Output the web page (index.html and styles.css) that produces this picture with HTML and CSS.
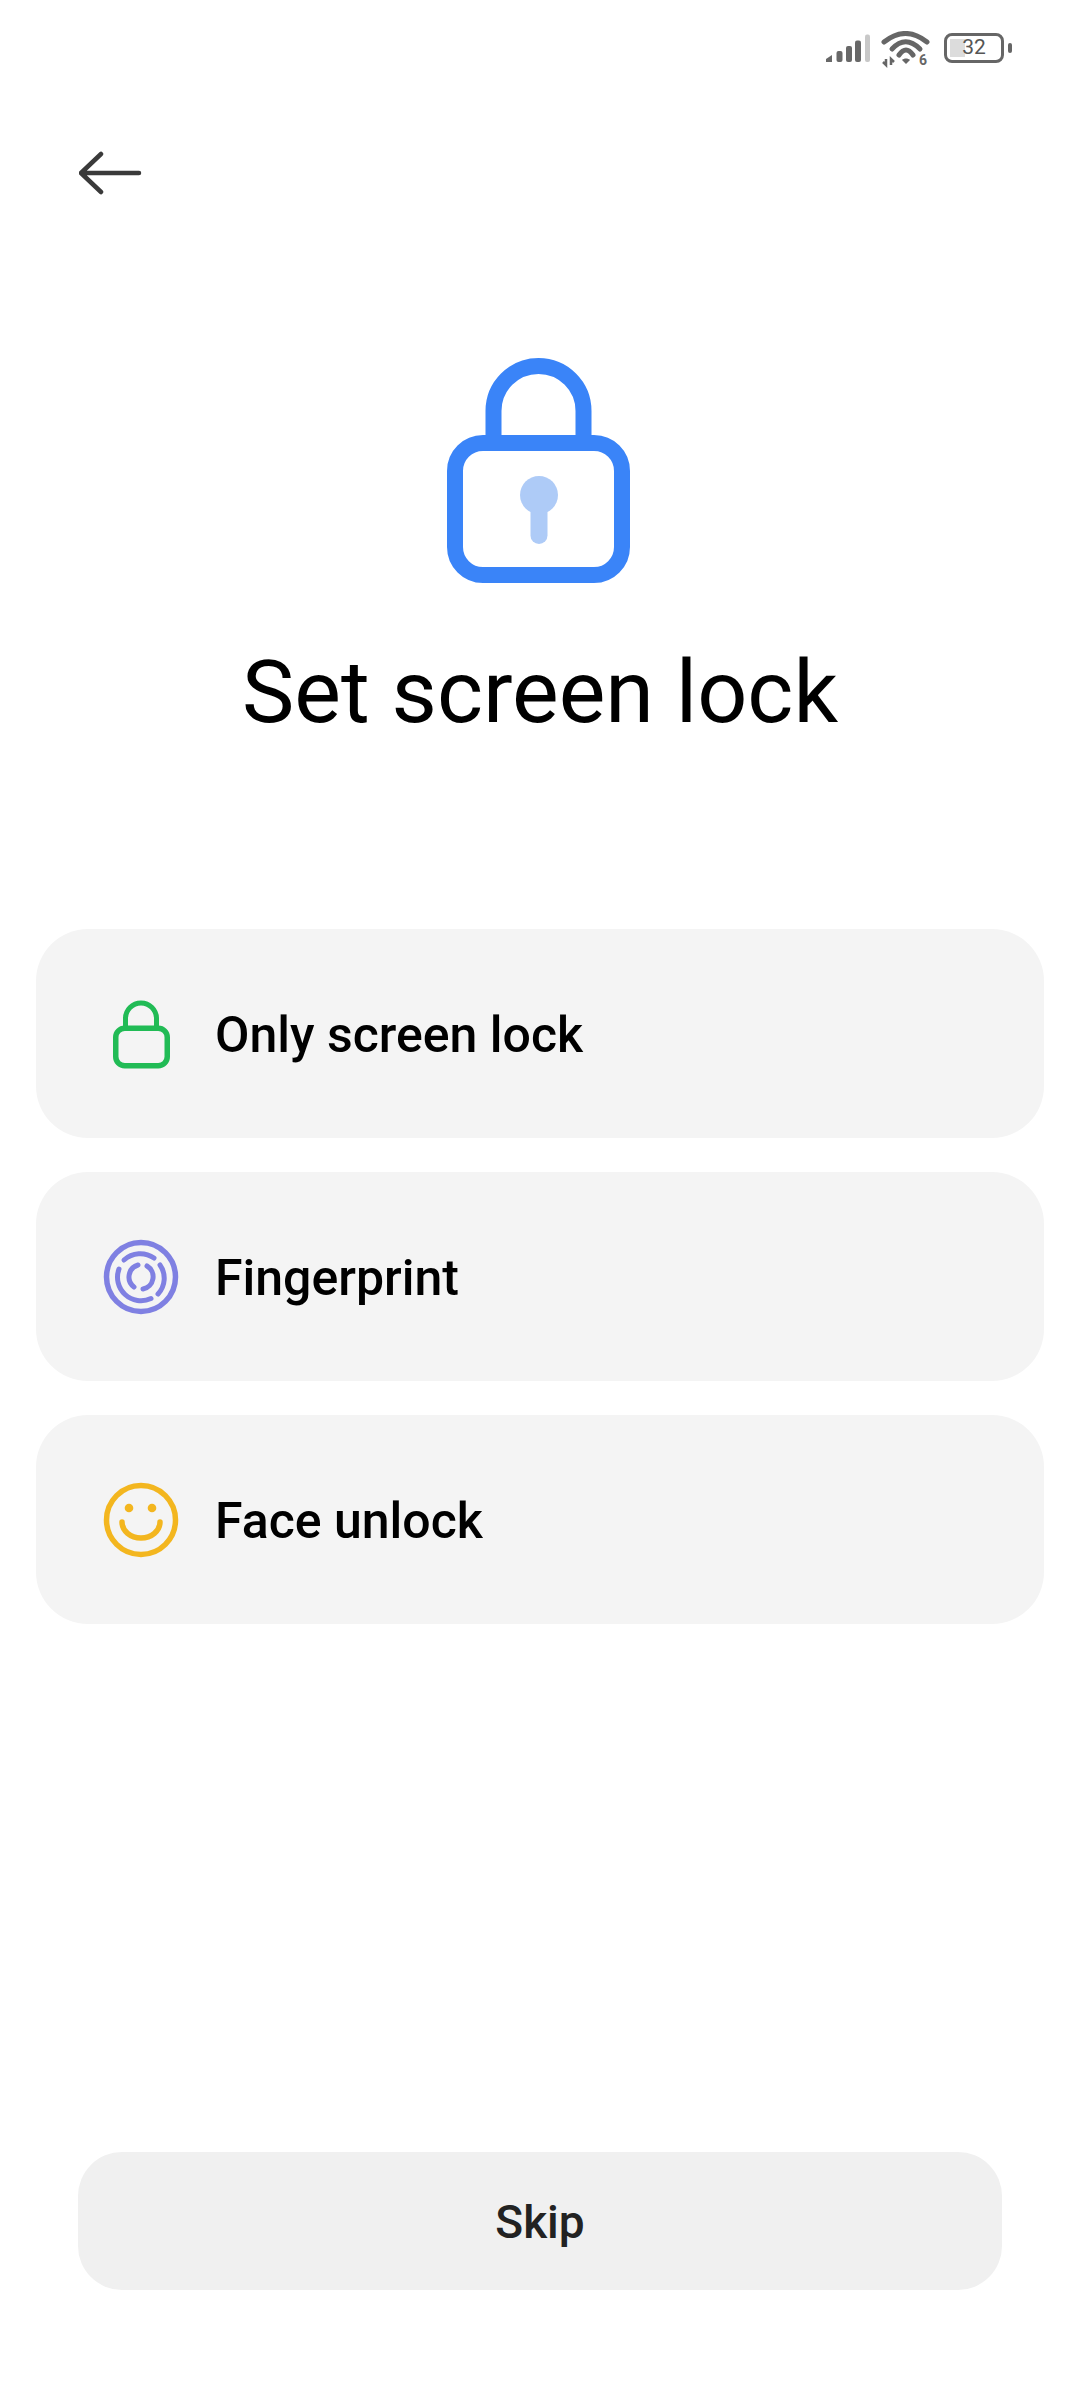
FILE: index.html
```html
<!DOCTYPE html>
<html lang="en">

<head>
    <meta charset="UTF-8">
    <meta name="viewport" content="width=device-width, initial-scale=1.0">
    <title>Set screen lock</title>
    <link rel="stylesheet" href="styles.css">
</head>

<body>
    <div class="page">
        <!-- status bar -->
        <div class="status">
            <svg class="status__signal" width="46" height="30" viewBox="0 0 46 30">
                <g fill="#686868">
                    <path d="M2 28v-3l6-4v7z"/>
                    <rect x="12.500" y="17" width="6" height="11" rx="2"/>
                    <rect x="22" y="12" width="6" height="16" rx="2"/>
                    <rect x="31" y="6.500" width="6" height="21.500" rx="2"/>
                </g>
                <rect x="41" y="0.500" width="5" height="27.500" rx="2" fill="#c8c8c8"/>
            </svg>
            <svg class="status__wifi" width="50" height="40" viewBox="0 0 50 40">
                <g stroke="#666" stroke-width="5" stroke-linecap="round" fill="none">
                    <path d="M3 11Q24.500 -6 46 11"/>
                    <path d="M11 18Q24.500 3.500 39 18"/>
                    <path d="M18 24Q25 14 32 24"/>
                </g>
                <path d="M21 29c2-2 6-2 8 0l-4 4z" fill="#666"/>
                <path d="M5 28v6l-3-3M10 34v-6l3 3" stroke="#666" stroke-width="2.500" fill="none"/>
                <text x="38" y="34" class="status__six">6</text>
            </svg>
            <div class="status__battery">
                <div class="status__level"></div>
                <span class="status__num">32</span>
            </div>
            <div class="status__nub"></div>
        </div>

        <!-- back -->
        <div class="back">
            <svg width="64" height="44" viewBox="0 0 64 44">
                <path d="M22 3L2 22L22 41M2 22H60" fill="none" stroke="#3a3a3a" stroke-width="4.500" stroke-linecap="round" stroke-linejoin="round"/>
            </svg>
        </div>

        <!-- header -->
        <div class="head">
            <svg width="186" height="230" viewBox="0 0 186 230">
                <path d="M46.500 90V56a45 45 0 0 1 90 0v34" fill="none" stroke="#3a84f8" stroke-width="16"/>
                <rect x="8" y="88" width="167" height="132" rx="28" fill="none" stroke="#3a84f8" stroke-width="16"/>
                <circle cx="92" cy="140" r="19" fill="#aecbf7"/>
                <path d="M92 145v35.500" stroke="#aecbf7" stroke-width="17" stroke-linecap="round"/>
            </svg>
            <h1 class="head__title">Set screen lock</h1>
        </div>

        <!-- options -->
        <ul class="options">
            <li class="options__item">
                <div class="options__icon">
                    <svg width="76" height="76" viewBox="0 0 76 76">
                        <path d="M22.500 33V22.500a15.500 15.500 0 0 1 31 0V33" fill="none" stroke="#21bb55" stroke-width="5"/>
                        <rect x="12.750" y="32.250" width="51.500" height="37.500" rx="9" fill="none" stroke="#21bb55" stroke-width="5.500"/>
                    </svg>
                </div>
                <span class="options__label">Only screen lock</span>
            </li>
            <li class="options__item">
                <div class="options__icon">
                    <svg width="76" height="76" viewBox="0 0 76 76">
                        <g fill="none" stroke="#7f80e2" stroke-linecap="round" stroke-width="5">
                            <circle cx="38" cy="38" r="34.500" stroke-width="5.500"/>
                            <path d="M21 21A24 24 0 0 1 51 19"/>
                            <path d="M16 30A23.500 23.500 0 0 0 48 59.500"/>
                            <path d="M57 26A23 23 0 0 1 55 55"/>
                            <path d="M35 26A12.500 12.500 0 0 0 31 48"/>
                            <path d="M44 27A12.500 12.500 0 0 1 40 50"/>
                        </g>
                    </svg>
                </div>
                <span class="options__label">Fingerprint</span>
            </li>
            <li class="options__item">
                <div class="options__icon">
                    <svg width="76" height="76" viewBox="0 0 76 76">
                        <circle cx="38" cy="38" r="34.500" fill="none" stroke="#f3b61f" stroke-width="5.500"/>
                        <circle cx="26" cy="26" r="4.300" fill="#f3b61f"/>
                        <circle cx="49" cy="26" r="4.300" fill="#f3b61f"/>
                        <path d="M19 40A19 16 0 0 0 57 40" fill="none" stroke="#f3b61f" stroke-width="5.500" stroke-linecap="round"/>
                    </svg>
                </div>
                <span class="options__label">Face unlock</span>
            </li>
        </ul>

        <div class="skip">Skip</div>
    </div>
</body>

</html>
```

FILE: styles.css
```css
* {
    margin: 0;
    padding: 0;
    box-sizing: border-box;
}

body {
    background-color: #fff;
    font-family: Roboto, sans-serif;
    color: #000;
    height: 2400px;
    overflow: hidden;
}

li {
    list-style: none;
}

.page {
    width: 1080px;
    height: 2400px;
    display: flex;
    flex-direction: column;
}

/* status bar */
.status {
    height: 72px;
    padding: 31px 68px 0 0;
    display: flex;
    justify-content: flex-end;
    align-items: flex-start;
}

.status__signal {
    margin-top: 3px;
    margin-right: 11px;
}

.status__wifi {
    margin-right: 13px;
}

.status__battery {
    width: 60px;
    height: 30px;
    margin-top: 2px;
    border: 3.500px solid #666;
    border-radius: 8px;
    padding: 3px;
    position: relative;
}

.status__level {
    width: 32%;
    height: 100%;
    background-color: #dcdcdc;
}

.status__num {
    position: absolute;
    left: 0;
    right: 0;
    top: 0;
    text-align: center;
    font-size: 21px;
    line-height: 23px;
    color: #555;
}

.status__six {
    font-family: Roboto, sans-serif;
    font-size: 14px;
    font-weight: 700;
    fill: #666;
}

.status__nub {
    width: 4px;
    height: 10px;
    margin: 12px 0 0 4px;
    background-color: #666;
    border-radius: 2px;
}

/* back */
.back {
    height: 44px;
    margin: 79px 0 0 79px;
}

/* header */
.head {
    margin-top: 160px;
    display: flex;
    flex-direction: column;
    align-items: center;
}

.head svg {
    display: block;
}

.head__title {
    margin-top: 55px;
    font-size: 88px;
    line-height: 104px;
    font-weight: 400;
}

/* options */
.options {
    margin: 185px 36px 0;
    display: flex;
    flex-direction: column;
    gap: 34px;
}

.options__item {
    height: 209px;
    padding-left: 67px;
    display: flex;
    align-items: center;
    gap: 36px;
    background-color: #f4f4f4;
    border-radius: 52px;
}

.options__icon {
    width: 76px;
    height: 76px;
}

.options__label {
    margin-top: 2px;
    font-size: 50px;
    font-weight: 500;
}

/* skip */
.skip {
    height: 138px;
    margin: auto 78px 110px;
    padding-top: 2px;
    display: flex;
    align-items: center;
    justify-content: center;
    background-color: #f0f0f0;
    border-radius: 44px;
    font-size: 46px;
    font-weight: 500;
    color: #222;
}
```
